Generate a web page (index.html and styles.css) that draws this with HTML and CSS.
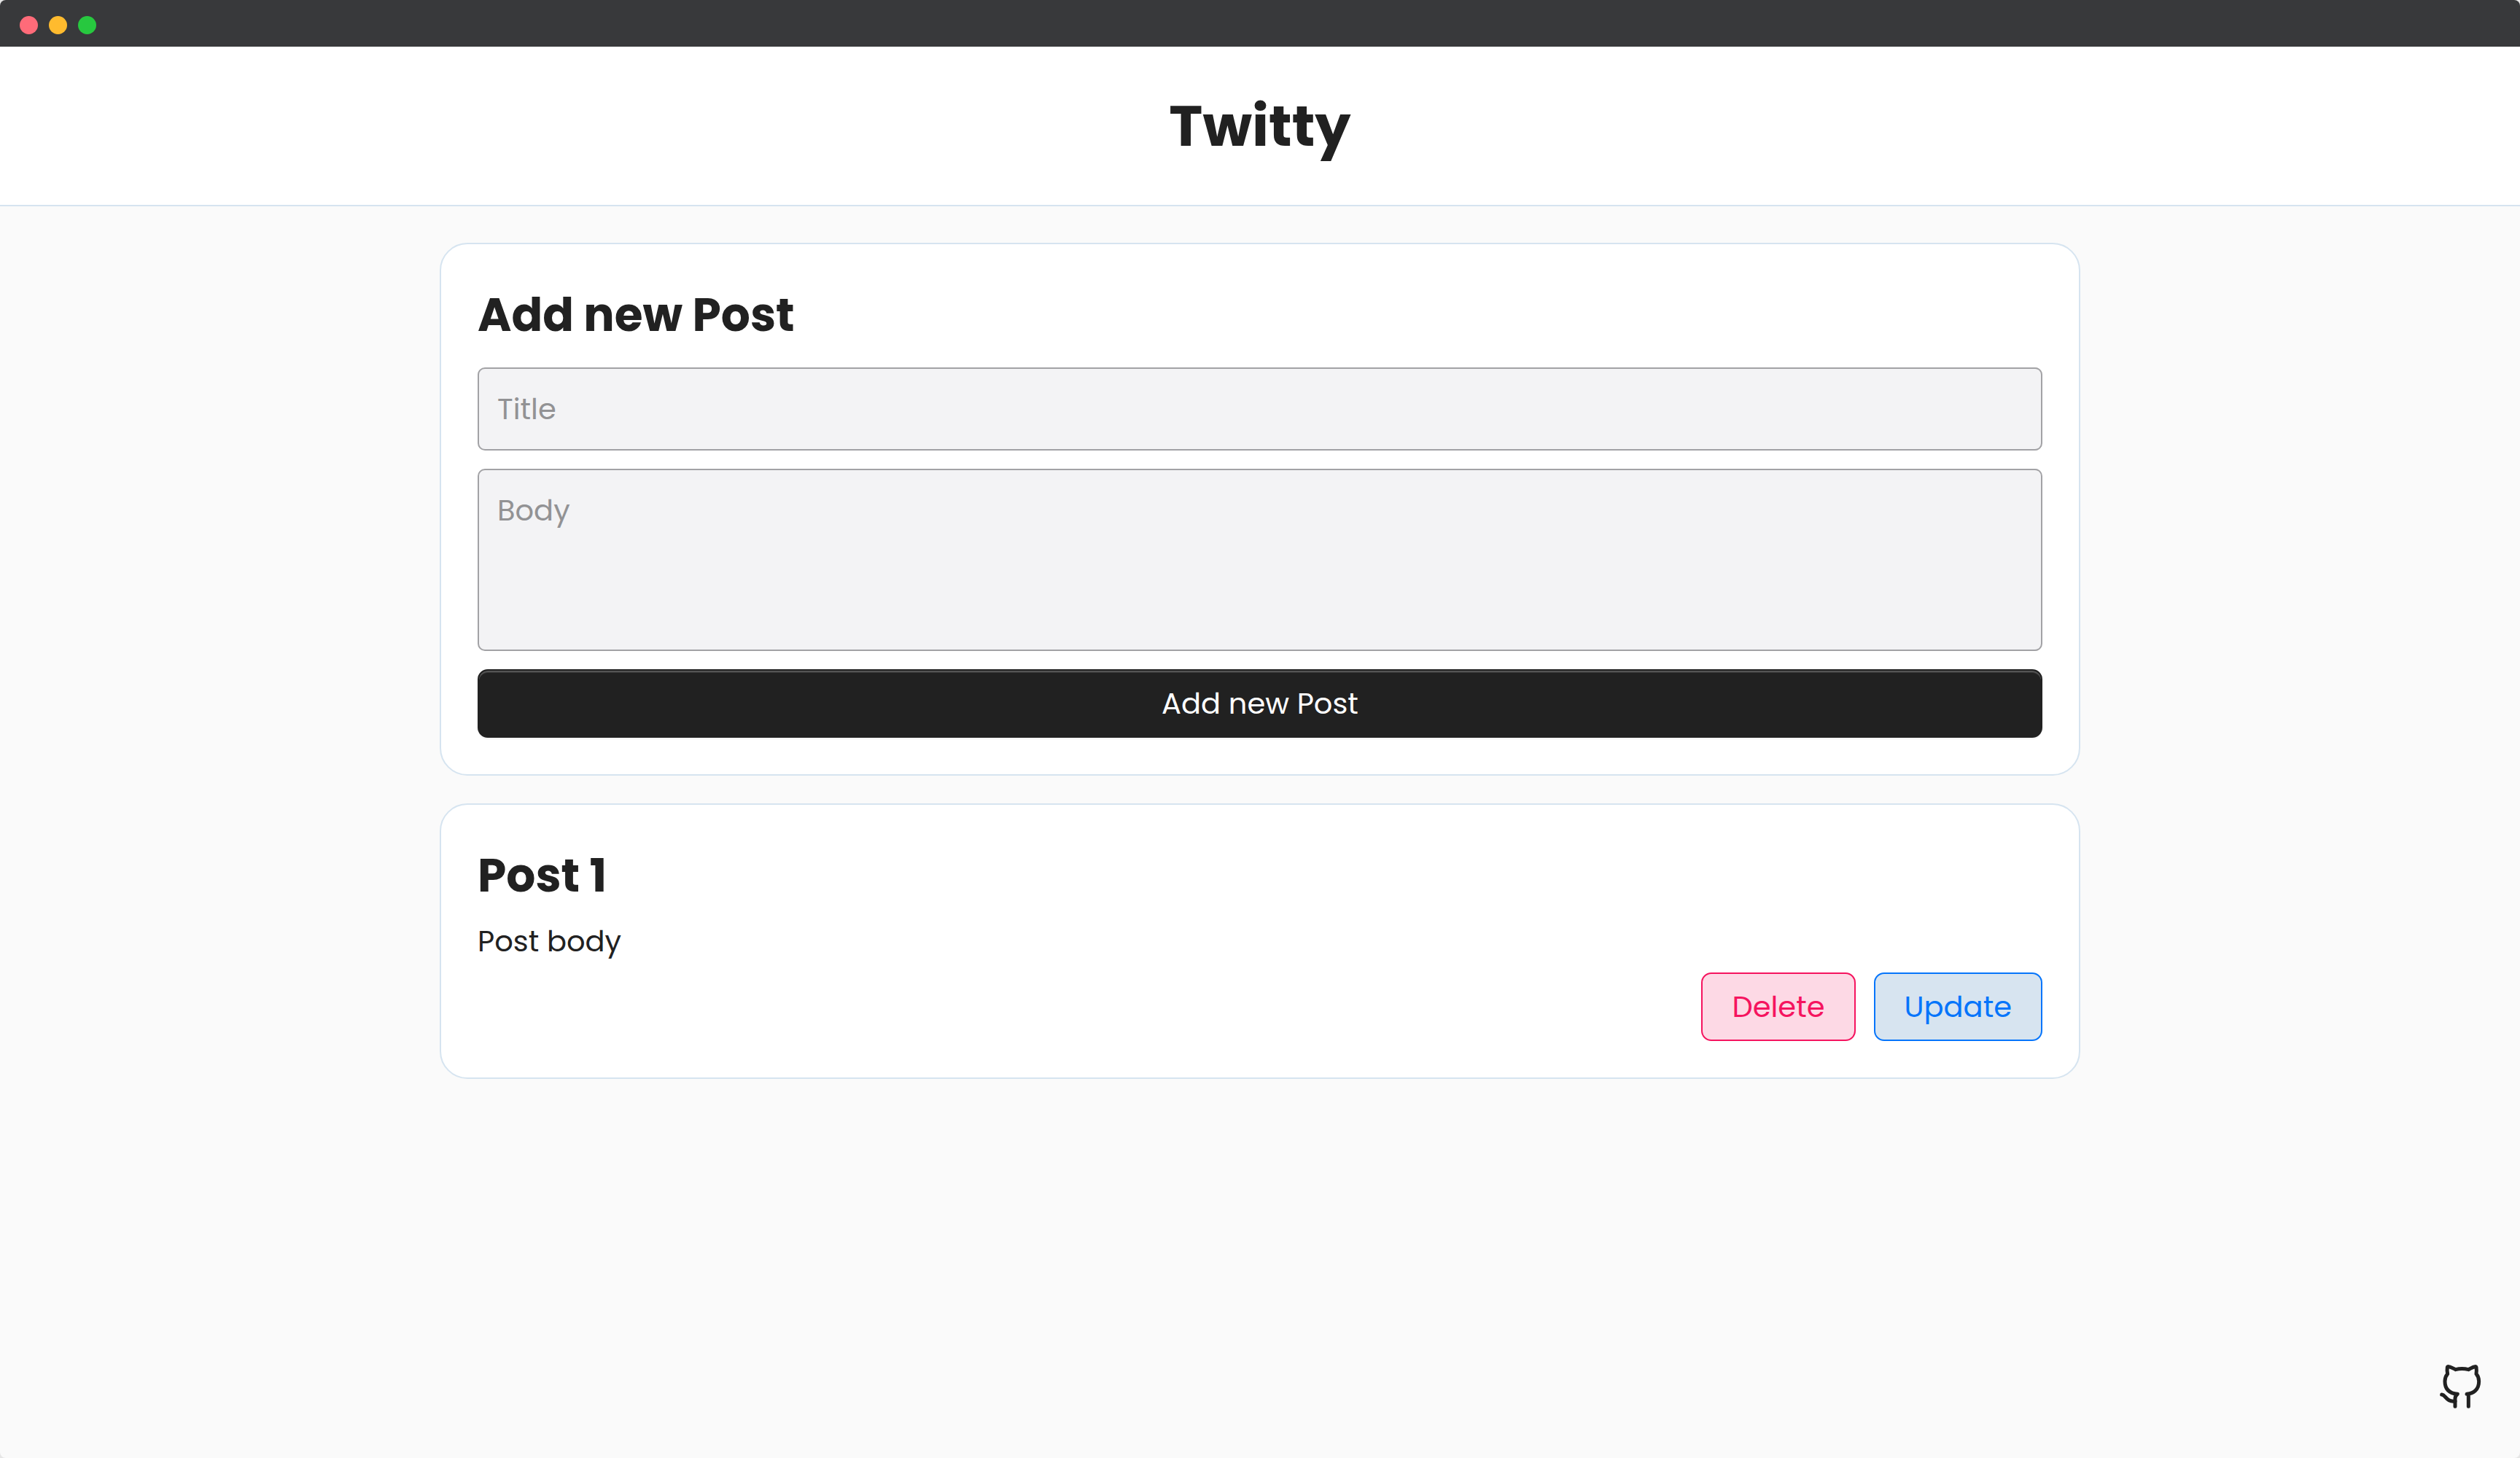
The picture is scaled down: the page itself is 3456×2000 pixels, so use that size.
FILE: index.html
```
<!DOCTYPE html>
<html lang="en">
<head>
  <meta charset="utf-8">
  <meta name="viewport" content="width=device-width, initial-scale=1">
  <title>Twitty</title>
  <link rel="stylesheet" href="styles.css">
</head>
<body>
  <div class="window">
    <div class="titlebar">
      <span class="dot dot-close"></span>
      <span class="dot dot-minimize"></span>
      <span class="dot dot-zoom"></span>
    </div>
    <header class="header">
      <h1 class="brand">Twitty</h1>
    </header>
    <main class="feed">
      <form class="card form">
        <h2 class="heading">Add new Post</h2>
        <input class="field" type="text" name="title" placeholder="Title" aria-label="Title">
        <textarea class="field field-body" name="body" placeholder="Body" aria-label="Body"></textarea>
        <button class="button button-primary" type="button">Add new Post</button>
      </form>
      <article class="card post">
        <h2 class="heading">Post 1</h2>
        <p class="text">Post body</p>
        <div class="actions">
          <button class="button button-delete" type="button">Delete</button>
          <button class="button button-update" type="button">Update</button>
        </div>
      </article>
    </main>
    <a class="github" href="#" aria-label="GitHub">
      <svg class="github-icon" viewBox="87 92 180 186" aria-hidden="true">
        <path d="M208 267V222Q208 216 201 216C226 213 251 200 251 163C251 150 247 141 240 133C242 123 241 112 240 106Q240 102 234 103C226 104 218 110 208 115Q181 108 155 115C145 110 135 104 127 103Q121 102 121 106C120 112 120 123 122 133C115 141 111 150 111 163C111 197 132 213 163 216Q153 222 153 235V267"/>
        <path d="M153 245C130 249 120 236 110 225Q105 219 98 218"/>
      </svg>
    </a>
  </div>
</body>
</html>
```
FILE: styles.css
```
:root {
  --ink: #212121;
  --line: #d6e4f0;
  --page: #fafafa;
}

* {
  box-sizing: border-box;
}

body {
  margin: 0;
  background: #e6e6e6;
  color: var(--ink);
  font-family: Poppins, Inter, "Open Sans", sans-serif;
  font-size: 40px;
  line-height: 60px;
}

.window {
  min-height: 100vh;
  overflow: hidden;
  border-radius: 8px;
  background: var(--page);
}

.titlebar {
  display: flex;
  align-items: center;
  gap: 15px;
  height: 64px;
  padding: 4px 27px 0;
  background: #38393b;
}

.dot {
  width: 25px;
  height: 25px;
  border-radius: 50%;
}

.dot-close {
  background: #ff6b79;
}

.dot-minimize {
  background: #ffbb2e;
}

.dot-zoom {
  background: #27c83f;
}

.header {
  padding: 50px;
  border-bottom: 2px solid var(--line);
  background: #fff;
  text-align: center;
}

.brand {
  margin: 0;
  font-size: 78px;
  font-weight: 700;
  line-height: 117px;
}

.feed {
  display: flex;
  flex-direction: column;
  gap: 38px;
  max-width: 2350px;
  margin: 0 auto;
  padding: 50px;
}

.card {
  display: flex;
  flex-direction: column;
  padding: 50px;
  border: 2px solid var(--line);
  border-radius: 38px;
  background: #fff;
}

.form {
  gap: 25px;
}

.post {
  gap: 13px;
}

.heading {
  margin: 0;
  font-size: 63px;
  font-weight: 700;
  line-height: 94px;
}

.text {
  margin: 0;
}

.field {
  display: block;
  width: 100%;
  height: 114px;
  margin: 0;
  padding: 25px;
  border: 2px solid #a2a2a5;
  border-radius: 10px;
  background: #f3f3f5;
  color: var(--ink);
  font: inherit;
}

.field::placeholder {
  color: #929294;
  opacity: 1;
}

.field-body {
  height: 250px;
  resize: none;
}

.actions {
  display: flex;
  justify-content: flex-end;
  gap: 25px;
}

.button {
  padding: 15px 40px;
  border: 2px solid;
  border-radius: 14px;
  font: inherit;
  cursor: pointer;
}

.button-primary {
  border-color: var(--ink);
  background: var(--ink);
  box-shadow: inset 0 2px 0 #555, inset 0 3px 0 #383838, 0 2px 2px rgba(0, 0, 0, 0.05);
  color: #fff;
}

.button-delete {
  border-color: #f5145f;
  background: #fdd9e5;
  color: #f5145f;
}

.button-update {
  border-color: #0675fb;
  background: #d7e4f0;
  color: #0675fb;
}

.github {
  position: fixed;
  right: 51px;
  bottom: 67px;
  display: flex;
}

.github-icon {
  width: 60px;
  height: 62px;
  fill: none;
  stroke: var(--ink);
  stroke-width: 15;
  stroke-linecap: round;
  stroke-linejoin: round;
}
```
